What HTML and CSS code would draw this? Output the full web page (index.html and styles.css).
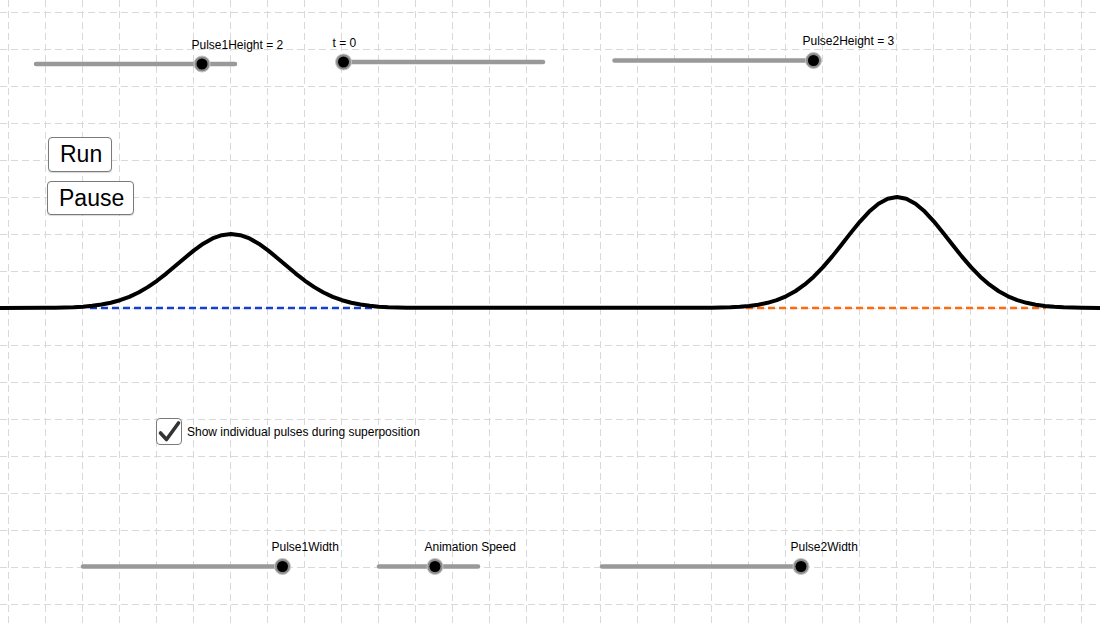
FILE: index.html
```html
<!DOCTYPE html>
<html>
<head>
<meta charset="utf-8">
<link rel="stylesheet" href="styles.css">
</head>
<body>
<div class="applet">
  <svg class="canvas" width="1100" height="625" viewBox="0 0 1100 625" xmlns="http://www.w3.org/2000/svg">
    <g class="grid-lines">
      <path class="grid" d="M8.5 0V625M45.5 0V625M82.5 0V625M119.5 0V625M156.5 0V625M193.5 0V625M230.5 0V625M267.5 0V625M304.5 0V625M341.5 0V625M378.5 0V625M415.5 0V625M452.5 0V625M489.5 0V625M526.5 0V625M563.5 0V625M600.5 0V625M637.5 0V625M674.5 0V625M711.5 0V625M748.5 0V625M785.5 0V625M822.5 0V625M859.5 0V625M896.5 0V625M933.5 0V625M970.5 0V625M1007.5 0V625M1044.5 0V625M1081.5 0V625"/>
      <path class="grid" d="M0 12.5H1100M0 49.5H1100M0 86.5H1100M0 123.5H1100M0 160.5H1100M0 197.5H1100M0 234.5H1100M0 271.5H1100M0 308.5H1100M0 345.5H1100M0 382.5H1100M0 419.5H1100M0 456.5H1100M0 493.5H1100M0 530.5H1100M0 567.5H1100M0 604.5H1100"/>
    </g>

    <line class="pulse-blue" x1="90" y1="308" x2="374" y2="308"/>
    <line class="pulse-orange" x1="746" y1="308" x2="1046" y2="308"/>

    <path class="wave" d="M-5 308 L46 307.86 L55.25 307.74 L64.5 307.53 L73.75 307.19 L83 306.64 L92.25 305.8 L101.5 304.54 L110.75 302.72 L120 300.2 L129.25 296.83 L138.5 292.49 L147.75 287.13 L157 280.78 L166.25 273.59 L175.5 265.83 L184.75 257.93 L194 250.37 L203.25 243.71 L212.5 238.49 L221.75 235.15 L231 234 L240.25 235.15 L249.5 238.49 L258.75 243.71 L268 250.37 L277.25 257.93 L286.5 265.83 L295.75 273.59 L305 280.78 L314.25 287.13 L323.5 292.49 L332.75 296.83 L342 300.2 L351.25 302.72 L360.5 304.54 L369.75 305.8 L379 306.64 L388.25 307.19 L397.5 307.53 L406.75 307.74 L416 307.86 L712 307.79 L721.25 307.61 L730.5 307.3 L739.75 306.78 L749 305.96 L758.25 304.7 L767.5 302.81 L776.75 300.08 L786 296.3 L795.25 291.24 L804.5 284.73 L813.75 276.69 L823 267.17 L832.25 256.38 L841.5 244.74 L850.75 232.89 L860 221.55 L869.25 211.56 L878.5 203.73 L887.75 198.72 L897 197 L906.25 198.72 L915.5 203.73 L924.75 211.56 L934 221.55 L943.25 232.89 L952.5 244.74 L961.75 256.38 L971 267.17 L980.25 276.69 L989.5 284.73 L998.75 291.24 L1008 296.3 L1017.25 300.08 L1026.5 302.81 L1035.75 304.7 L1045 305.96 L1054.25 306.78 L1063.5 307.3 L1072.75 307.61 L1082 307.79 L1105 308"/>

    <g class="slider">
      <line class="track" x1="36" y1="64" x2="235" y2="64"/>
      <circle class="halo" cx="202" cy="64" r="8"/>
      <circle class="knob" cx="202" cy="64" r="5.5"/>
      <text class="label" x="191.5" y="48.5">Pulse1Height = 2</text>
    </g>
    <g class="slider">
      <line class="track" x1="343" y1="62" x2="543" y2="62"/>
      <circle class="halo" cx="343.5" cy="62" r="8"/>
      <circle class="knob" cx="343.5" cy="62" r="5.5"/>
      <text class="label" x="332.5" y="47">t = 0</text>
    </g>
    <g class="slider">
      <line class="track" x1="614.5" y1="60.5" x2="813" y2="60.5"/>
      <circle class="halo" cx="813.5" cy="60.5" r="8"/>
      <circle class="knob" cx="813.5" cy="60.5" r="5.5"/>
      <text class="label" x="802.5" y="45">Pulse2Height = 3</text>
    </g>
    <g class="slider">
      <line class="track" x1="83" y1="566.5" x2="282" y2="566.5"/>
      <circle class="halo" cx="282.5" cy="566.5" r="8"/>
      <circle class="knob" cx="282.5" cy="566.5" r="5.5"/>
      <text class="label" x="271.5" y="551">Pulse1Width</text>
    </g>
    <g class="slider">
      <line class="track" x1="379" y1="566.5" x2="478" y2="566.5"/>
      <circle class="halo" cx="435" cy="566.5" r="8"/>
      <circle class="knob" cx="435" cy="566.5" r="5.5"/>
      <text class="label" x="424.5" y="551">Animation Speed</text>
    </g>
    <g class="slider">
      <line class="track" x1="602" y1="566.5" x2="801" y2="566.5"/>
      <circle class="halo" cx="801" cy="566.5" r="8"/>
      <circle class="knob" cx="801" cy="566.5" r="5.5"/>
      <text class="label" x="790.5" y="551">Pulse2Width</text>
    </g>
  </svg>

  <div class="buttons">
    <button class="btn btn-run">Run</button>
    <button class="btn btn-pause">Pause</button>
  </div>

  <label class="check">
    <span class="check-box">
      <svg width="26" height="27" viewBox="0 0 26 27" xmlns="http://www.w3.org/2000/svg">
        <path class="tick" d="M4.5 15 L10.5 21.5 L22.5 5"/>
      </svg>
    </span>
    <span class="check-text">Show individual pulses during superposition</span>
  </label>
</div>
</body>
</html>
```

FILE: styles.css
```css
html, body {
  margin: 0;
  padding: 0;
  background: #ffffff;
}

.applet {
  position: relative;
  width: 1100px;
  height: 625px;
  overflow: hidden;
  background: #ffffff;
  font-family: "Liberation Sans", Arial, sans-serif;
}

.canvas {
  position: absolute;
  left: 0;
  top: 0;
  display: block;
}

.grid {
  fill: none;
  stroke: #d9d9d9;
  stroke-width: 1;
  stroke-dasharray: 7 4;
}

.wave {
  fill: none;
  stroke: #000000;
  stroke-width: 4;
  stroke-linejoin: round;
  stroke-linecap: round;
}

.pulse-blue {
  stroke: #1440d0;
  stroke-width: 2.5;
  stroke-dasharray: 7 4;
}

.pulse-orange {
  stroke: #ff6a10;
  stroke-width: 2.5;
  stroke-dasharray: 7 4;
}

.track {
  stroke: #999999;
  stroke-width: 4.5;
  stroke-linecap: round;
}

.halo {
  fill: #8a8a8a;
  stroke: #c8c8c8;
  stroke-width: 1;
}

.knob {
  fill: #000000;
}

.label {
  font-family: "Liberation Sans", Arial, sans-serif;
  font-size: 12px;
  fill: #000000;
}

.buttons {
  position: absolute;
  left: 47px;
  top: 137px;
  display: flex;
  flex-direction: column;
  align-items: flex-start;
  gap: 9px;
}

.btn {
  box-sizing: border-box;
  height: 34.5px;
  padding: 0 10px 0 11px;
  margin: 0;
  background: #ffffff;
  border: 1.3px solid #7a7a7a;
  border-radius: 4px;
  font-family: "Liberation Sans", Arial, sans-serif;
  font-size: 23px;
  line-height: 32px;
  color: #000000;
  box-shadow: 0 1px 1px rgba(0, 0, 0, 0.15);
}

.btn-run {
  margin-left: 1px;
  width: 64px;
}

.btn-pause {
  width: 87px;
}

.check {
  position: absolute;
  left: 156px;
  top: 418px;
  display: flex;
  align-items: center;
  gap: 5px;
}

.check-box {
  box-sizing: border-box;
  width: 26px;
  height: 27px;
  border: 1.4px solid #7a7a7a;
  border-radius: 4px;
  background: #ffffff;
  display: flex;
  align-items: center;
  justify-content: center;
  position: relative;
}

.check-box svg {
  position: absolute;
  left: -1.4px;
  top: -1.4px;
}

.tick {
  fill: none;
  stroke: #333333;
  stroke-width: 3.6;
  stroke-linecap: round;
  stroke-linejoin: round;
}

.check-text {
  font-size: 12px;
  color: #000000;
  line-height: 14px;
  margin-top: 1px;
}
```
